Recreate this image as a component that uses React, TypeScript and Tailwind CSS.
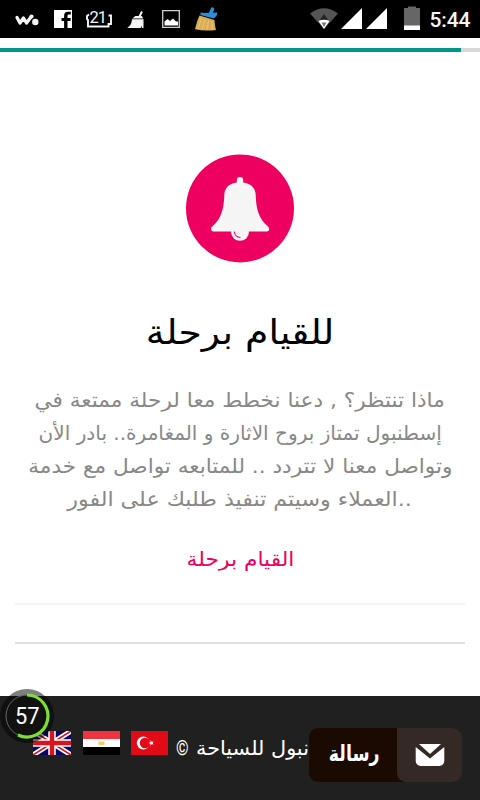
import React from 'react';

const lines = [
  { text: 'ماذا تنتظر؟ , دعنا نخطط معا لرحلة ممتعة في', fit: 'scale-x-[1.082]' },
  { text: 'إسطنبول تمتاز بروح الاثارة و المغامرة.. بادر الأن', fit: 'scale-x-[1.002]' },
  { text: 'وتواصل معنا لا تتردد .. للمتابعه تواصل مع خدمة', fit: 'scale-x-[1.08]' },
  { text: 'العملاء وسيتم تنفيذ طلبك على الفور..', fit: 'scale-x-[1.107]' },
];

function StatusBar() {
  return (
    <header className="flex h-[38px] items-center justify-between bg-black">
      <svg width="240" height="38" viewBox="0 0 240 38">
        {/* walkman */}
        <path
          d="M17 17.500l3 5.500 3.500-5 3 5 4.500-6"
          fill="none"
          stroke="#f5f5f5"
          strokeWidth="3.300"
          strokeLinecap="round"
          strokeLinejoin="round"
        />
        <circle cx="31.500" cy="16.500" r="2.100" fill="#f5f5f5" />
        <circle cx="35.300" cy="22" r="3.200" fill="#f5f5f5" />
        {/* facebook */}
        <path
          d="M54 10h18v18h-4.500v-7h2.900l.4-3h-3.300v-2c0-1.100.5-1.500 1.500-1.500h1.800v-2.700h-2.700c-2.800 0-4 1.500-4 3.900v2.300h-2.600v3h2.600v7H54z"
          fill="#fff"
        />
        {/* battery percent */}
        <path
          d="M89 14.500l-2 1.500v3l1 1v6.500h20.500V24h2.500v-8.500h-2.500"
          fill="none"
          stroke="#f5f5f5"
          strokeWidth="1.900"
        />
        <path d="M90 11h17v12.500H90z" fill="#000" />
        <text
          x="89.500"
          y="23"
          fill="#f5f5f5"
          fontSize="16.500"
          textLength="17.500"
          fontFamily="Roboto, sans-serif"
        >
          21
        </text>
        {/* cleaner */}
        <path d="M142 11.500l-2.500 5" stroke="#f5f5f5" strokeWidth="2" />
        <path d="M132.300 18.500l3-2.500h6.500l1.500 2.500z" fill="#f5f5f5" />
        <path d="M132 19.300h11.500V28h-1.500l-.8-2.500-.4 2.500h-13.600c3-1.500 4.500-4.500 4.800-8.700z" fill="#f5f5f5" />
        {/* picture */}
        <path d="M162.700 10.700h16.600v16.600h-16.600z" fill="none" stroke="#cfcfcf" strokeWidth="1.300" />
        <path d="M164.500 25.500v-4l3-2.500 2.500 2 3-2.500 3 3h2v4z" fill="#fff" />
        {/* brush */}
        <path d="M199.500 15.500l15 4.500c.3 4 .7 7 1.500 10-7 1-14 .8-21-.8 1.300-5 2.500-9.500 4.500-13.700z" fill="#d9ae55" />
        <path
          d="M201.500 18l-3.500 11M205 19l-3 11M208.500 20l-1.500 10M212 21v9"
          fill="none"
          stroke="#f0cf88"
          strokeWidth="0.700"
        />
        <path d="M200.500 12.500l4 .5 13-.5-1 3.500-3 2.500-13-3.500z" fill="#2b8fdc" />
        <path d="M212.500 9l-2.500 6" stroke="#2b8fdc" strokeWidth="3.500" strokeLinecap="round" />
      </svg>
      <svg width="240" height="38" viewBox="0 0 240 38">
        <path d="M70 13.500Q84 3 98 13.500L84 29z" fill="#555" />
        <path d="M84 14l-4 6h8z" fill="#222" />
        <path d="M78.500 21q5.500-2.500 11 0L84 29z" fill="#fff" />
        <path d="M81.500 22.500h5L84 27z" fill="#777" />
        <path d="M101 29l21-21v21zM126 29l21-21v21z" fill="#fff" />
        <path d="M168 6.500h8V8h4v22h-16V8h4z" fill="#666" />
        <path d="M164 25.500h16V30h-16z" fill="#fff" />
        <text
          x="189.500"
          y="27"
          fill="#f5f5f5"
          fontSize="21"
          fontWeight="500"
          textLength="41"
          fontFamily="Roboto, sans-serif"
        >
          5:44
        </text>
      </svg>
    </header>
  );
}

function BellIcon() {
  return (
    <svg width="108" height="109" viewBox="0 0 108 109" className="block">
      <circle cx="54" cy="54.400" r="54" fill="#ed005f" />
      <path
        d="M50.800 28.500V26.300a3.200 3.200 0 0 1 6.400 0v2.200C65 29.500 69.500 34 69.700 41c.3 14 3.300 24 12.300 31.500 2 1.700 1.200 5-1 5H27.500c-2.300 0-3.500-3.500-1.200-5C35 65 38 55 38.300 41 38.500 34 43 29.500 50.800 28.500z"
        fill="#f5f5f5"
      />
      <circle cx="54" cy="77.800" r="9" fill="#f5f5f5" />
      <path d="M48.300 77.500q.5 5.500 6.200 6" fill="none" stroke="#ed005f" strokeWidth="1.100" />
    </svg>
  );
}

function UkFlag() {
  return (
    <svg width="38" height="24" viewBox="0 0 38 24">
      <path d="M0 0h38v24H0z" fill="#06066b" />
      <path d="M0 0l38 24M38 0L0 24" stroke="#fff" strokeWidth="5" />
      <path d="M0 0l38 24M38 0L0 24" stroke="#d8141c" strokeWidth="1.600" />
      <path d="M19 0v24M0 12h38" stroke="#fff" strokeWidth="7.500" />
      <path d="M19 0v24M0 12h38" stroke="#d8141c" strokeWidth="4.500" />
    </svg>
  );
}

function EgyptFlag() {
  return (
    <svg width="37" height="24" viewBox="0 0 37 24">
      <path d="M0 0h37v8H0z" fill="#f0333f" />
      <path d="M0 8h37v8H0z" fill="#fff" />
      <path d="M0 16h37v8H0z" fill="#000" />
      <path d="M15.500 10l2 1 1-1 1 1 2-1v4h-6z" fill="#f3cd63" />
    </svg>
  );
}

function TurkeyFlag() {
  return (
    <svg width="37" height="24" viewBox="0 0 37 24">
      <path d="M0 0h37v24H0z" fill="#e30a17" />
      <circle cx="12.300" cy="12" r="6.500" fill="#fff" />
      <circle cx="14" cy="12" r="5.200" fill="#e30a17" />
      <path d="M17.500 12l2-.7v-2.100l1.300 1.700 2-.6-1.200 1.700 1.200 1.700-2-.6-1.300 1.700v-2.100z" fill="#fff" />
    </svg>
  );
}

function ProgressBadge() {
  return (
    <div className="absolute left-0 top-[689px] h-[54px] w-[54px]">
      <svg width="54" height="54" viewBox="0 0 54 54">
        <circle cx="27" cy="27" r="27" fill="#000" fillOpacity="0.5" />
        <circle cx="27" cy="27" r="21" fill="#111" />
        <circle cx="27" cy="27" r="21" fill="none" stroke="#666" strokeWidth="1" />
        <path d="M27 6a21 21 0 1 1-9 40" fill="none" stroke="#7ddf32" strokeWidth="3.200" />
        <text
          x="15"
          y="35.300"
          fill="#fff"
          fontSize="23.500"
          textLength="24.500"
          lengthAdjust="spacingAndGlyphs"
          fontFamily="Roboto, sans-serif"
        >
          57
        </text>
      </svg>
    </div>
  );
}

function MessageButton() {
  return (
    <button
      type="button"
      className="absolute left-[309px] top-[728px] flex h-[54px] w-[153px] overflow-hidden rounded-[9px] bg-[#1a0a02]"
    >
      <span className="flex h-full w-[88px] items-center justify-center pb-1 pl-0.5 text-xl font-bold text-white">
        <span className="scale-x-[0.87] scale-y-110">رسالة</span>
      </span>
      <span className="flex h-full w-[65px] items-center justify-center rounded-bl-[9px] bg-[#352925]">
        <svg width="30" height="22" viewBox="0 0 30 22">
          <path d="M4 0h22L15 10z" fill="#fff" />
          <path d="M.7 3L15 14.500 29.300 3V17a5 5 0 0 1-5 5H5.700a5 5 0 0 1-5-5z" fill="#fff" />
        </svg>
      </span>
    </button>
  );
}

export default function App() {
  return (
    <div className="relative h-[800px] w-[480px] overflow-hidden bg-white font-['DejaVu_Sans',sans-serif]">
      <StatusBar />
      <div className="mt-[10px] h-1 bg-[#d8d8d8]">
        <div className="h-full w-[461px] bg-[#009688]" />
      </div>
      <main className="flex h-[644px] flex-col items-center px-[15px] pt-[102px]">
        <BellIcon />
        <h1 className="mt-[44px] h-[50px] scale-x-[1.11] whitespace-nowrap text-[34px] leading-[50px] text-black">
          للقيام برحلة
        </h1>
        <div className="mt-[27px] flex flex-col items-center text-[20px] leading-[33px] text-[#888]">
          {lines.map((line) => (
            <p key={line.text} className={`whitespace-nowrap ${line.fit}`}>
              {line.text}
            </p>
          ))}
        </div>
        <a className="mt-[26px] h-[34px] scale-x-[1.09] whitespace-nowrap text-[20px] leading-[34px] text-[#ed005f]">
          القيام برحلة
        </a>
        <hr className="mt-[27px] w-full border-t-2 border-[#f4f4f4]" />
        <hr className="mt-[37px] w-full border-t-2 border-[#dedede]" />
      </main>
      <footer className="flex h-[104px] items-start bg-[#202020] pl-[33px] pt-[35px]">
        <UkFlag />
        <span className="ml-3">
          <EgyptFlag />
        </span>
        <span className="ml-[11px]">
          <TurkeyFlag />
        </span>
        <p className="ml-2 mt-px flex whitespace-nowrap text-[20px] leading-[32px] text-white">
          <span className="w-5 shrink-0 origin-left scale-x-[0.8] font-['Roboto',sans-serif]">©</span>
          <span className="origin-left scale-x-[1.04]">نبول للسياحة</span>
        </p>
      </footer>
      <ProgressBadge />
      <MessageButton />
    </div>
  );
}
